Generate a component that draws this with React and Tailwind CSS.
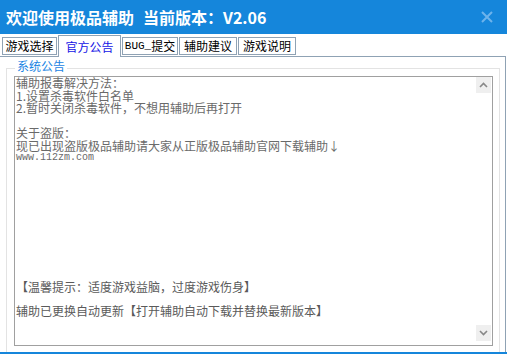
const tabs = ['游戏选择', '官方公告', 'BUG_提交', '辅助建议', '游戏说明']
const tabWidths = ['w-[55px]', 'w-[63px]', 'w-[56px]', 'w-[58px]', 'w-[58px]']

function TabLabel({ label }) {
  if (label.startsWith('BUG_')) {
    return (
      <>
        <span className="text-[11px]" style={{ fontFamily: '"Liberation Mono", monospace' }}>
          BUG_
        </span>
        提交
      </>
    )
  }
  return label
}

function Tab({ label, width, active }) {
  if (active) {
    return (
      <div
        className={`${width} h-[22px] -mb-px flex items-center justify-center whitespace-nowrap border border-b-0 border-[#8fa2b4] bg-white text-[12px] text-[#1414e6]`}
      >
        <TabLabel label={label} />
      </div>
    )
  }
  return (
    <div
      className={`${width} h-[18px] mb-[1px] flex items-center justify-center whitespace-nowrap border border-[#8fa2b4] bg-white text-[12px] text-black`}
    >
      <TabLabel label={label} />
    </div>
  )
}

function ScrollArrow({ up }) {
  return (
    <div className="w-[15px] h-[16px] bg-[#efefef] flex items-center justify-center">
      <svg width="9" height="6" viewBox="0 0 9 6">
        <path
          d={up ? 'M1 5 L4.5 1.5 L8 5' : 'M1 1 L4.5 4.5 L8 1'}
          fill="none"
          stroke="#888"
          strokeWidth="1.6"
        />
      </svg>
    </div>
  )
}

export default function App() {
  return (
    <div
      className="w-[507px] h-[354px] bg-white flex flex-col overflow-hidden border-b-2 border-[#1586db]"
      style={{ fontFamily: '"Noto Sans CJK SC", "Noto Sans", sans-serif' }}
    >
      <div className="h-[34px] shrink-0 bg-[#1586db] flex items-center pl-[6px] pr-[14px]">
        <div className="text-white font-bold text-[16px] leading-none">
          欢迎使用极品辅助<span className="ml-[9px]">当前版本：V2.06</span>
        </div>
        <div className="ml-auto text-[#6db3ec]">
          <svg width="12" height="12" viewBox="0 0 12 12">
            <path d="M1 1 L11 11 M11 1 L1 11" stroke="currentColor" strokeWidth="2" />
          </svg>
        </div>
      </div>

      <div className="h-[22px] shrink-0 flex items-end pl-[2px] gap-[1px] relative z-10">
        {tabs.map((t, i) => (
          <Tab key={t} label={t} width={tabWidths[i]} active={i === 1} />
        ))}
      </div>

      <div className="flex-1 border-t border-r border-[#8fa2b4] mr-[1px] pl-[6px] pr-[5px] pt-[4px]">
        <div className="relative h-full border-l border-t border-r border-[#e3e3e3] mt-[7px] pl-[7px] pr-[6px] pt-[7px]">
          <div className="absolute -top-[10px] left-[8px] bg-white px-[2px] text-[12px] leading-[14px] text-[#1a84e3]">
            系统公告
          </div>
          <div className="h-[270px] border border-[#a0a0a0] flex">
            <div className="flex-1 text-[12px] leading-[12.5px] text-[#6a6a6a] pl-[1px]">
              <div>辅助报毒解决方法：</div>
              <div>1.设置杀毒软件白名单</div>
              <div>2.暂时关闭杀毒软件，不想用辅助后再打开</div>
              <div>&nbsp;</div>
              <div>关于盗版：</div>
              <div>现已出现盗版极品辅助请大家从正版极品辅助官网下载辅助↓</div>
              <div
                className="text-[10px] leading-[12.5px]"
                style={{ fontFamily: '"Liberation Mono", monospace' }}
              >
                www.112zm.com
              </div>
              <div className="mt-[110px] leading-[24px] text-[#5a5a5a]">
                【温馨提示：适度游戏益脑，过度游戏伤身】
              </div>
              <div className="leading-[24px] text-[#5a5a5a]">
                辅助已更换自动更新【打开辅助自动下载并替换最新版本】
              </div>
            </div>
            <div className="w-[15px] mr-[1px] flex flex-col justify-between pb-[4px]">
              <ScrollArrow up />
              <ScrollArrow />
            </div>
          </div>
        </div>
      </div>
    </div>
  )
}
